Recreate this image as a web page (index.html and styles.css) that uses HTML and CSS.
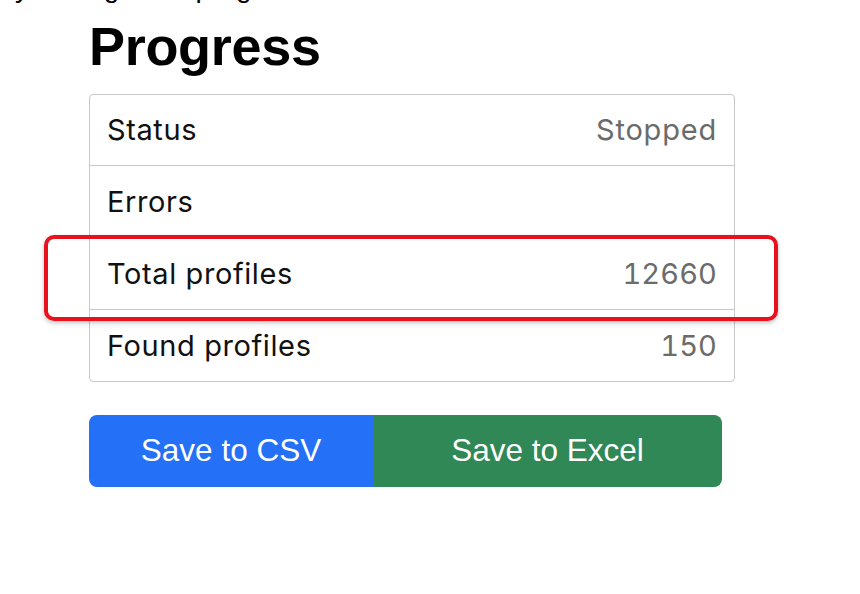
FILE: index.html
```html
<!DOCTYPE html>
<html lang="en">
<head>
<meta charset="utf-8">
<title>Progress</title>
<link rel="stylesheet" href="styles.css">
</head>
<body>
<div class="page">
  <p class="prev-line">y settings and progress</p>
  <h2 class="title">Progress</h2>
  <div class="stats">
    <div class="row"><span class="label">Status</span><span class="value">Stopped</span></div>
    <div class="row"><span class="label">Errors</span><span class="value"></span></div>
    <div class="row highlighted"><span class="label">Total profiles</span><span class="value num">12660</span></div>
    <div class="row"><span class="label">Found profiles</span><span class="value num">150</span></div>
  </div>
  <div class="btn-group">
    <button class="btn btn-csv">Save to CSV</button>
    <button class="btn btn-excel">Save to Excel</button>
  </div>
</div>
</body>
</html>
```
FILE: styles.css
```css
html, body {
  margin: 0;
  padding: 0;
  background: #ffffff;
}
body {
  width: 860px;
  height: 594px;
  overflow: hidden;
  font-family: "Liberation Sans", Arial, sans-serif;
  color: #000;
}
.page {
  padding-left: 89px;
  position: relative;
}
.prev-line {
  margin: -29px 0 0 -74px;
  font-size: 28px;
  line-height: 34px;
  height: 34px;
  color: #000;
}
.title {
  margin: 9px 0 15px 0;
  font-size: 54px;
  line-height: 1.2;
  font-weight: 700;
  letter-spacing: -0.3px;
}
.stats {
  width: 644px;
  border: 1px solid #c9c9c9;
  border-radius: 4px;
  font-family: "Inter", "Liberation Sans", sans-serif;
  font-size: 29px;
  letter-spacing: 0.6px;
}
.row {
  height: 71px;
  display: flex;
  align-items: center;
  justify-content: space-between;
  padding: 0 17px 0 17px;
  border-top: 1px solid #c9c9c9;
  position: relative;
}
.row:first-child {
  border-top: none;
  height: 70px;
}
.label {
  color: #111;
}
.value {
  color: #6b6b6b;
  letter-spacing: 0.8px;
}
.num {
  font-variant-numeric: tabular-nums;
  letter-spacing: 0.1px;
}
.highlighted::after {
  content: "";
  position: absolute;
  left: -46px;
  right: -44px;
  top: -3px;
  bottom: -12px;
  border: 4px solid #e8121f;
  border-radius: 10px;
  box-shadow: 0 2px 4px rgba(0, 0, 0, 0.25);
  pointer-events: none;
}
.btn-group {
  display: flex;
  margin-top: 33px;
  width: 633px;
}
.btn {
  height: 72px;
  border: none;
  margin: 0;
  padding: 0;
  color: #fff;
  font-family: "Liberation Sans", Arial, sans-serif;
  font-size: 31.5px;
  cursor: pointer;
}
.btn-csv {
  width: 284px;
  background: #2470f6;
  border-radius: 8px 0 0 8px;
}
.btn-excel {
  width: 349px;
  background: #2f8855;
  border-radius: 0 8px 8px 0;
}
```
